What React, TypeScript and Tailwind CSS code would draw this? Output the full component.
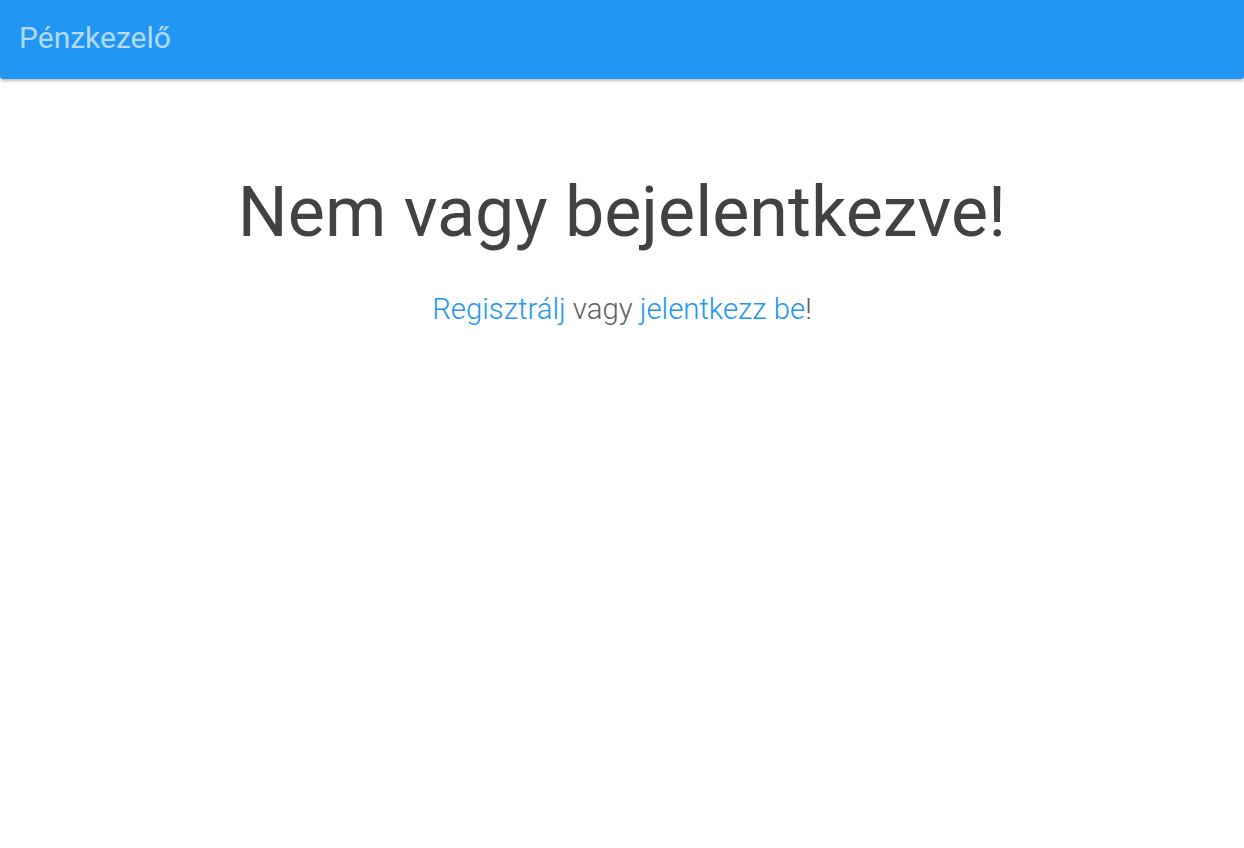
export default function App() {
  return (
    <div className="min-h-[848px] bg-white font-['Roboto',sans-serif]">
      <nav className="flex h-[79px] items-center rounded-b-[3px] bg-[#2196f3] px-[19px] pb-[3px] shadow-[0_2px_3px_rgba(0,0,0,0.25)]">
        <span className="text-[30px] leading-none text-[#b3dafc]">Pénzkezelő</span>
      </nav>
      <main className="flex flex-col items-center pt-[98px]">
        <h1 className="text-[70px] leading-none text-[#424242]">Nem vagy bejelentkezve!</h1>
        <p className="mt-[48px] text-[29.3px] font-light leading-none text-[#616161]">
          <a href="#" className="text-[#2196f3]">Regisztrálj</a> vagy{" "}
          <a href="#" className="text-[#2196f3]">jelentkezz be</a>!
        </p>
      </main>
    </div>
  );
}
